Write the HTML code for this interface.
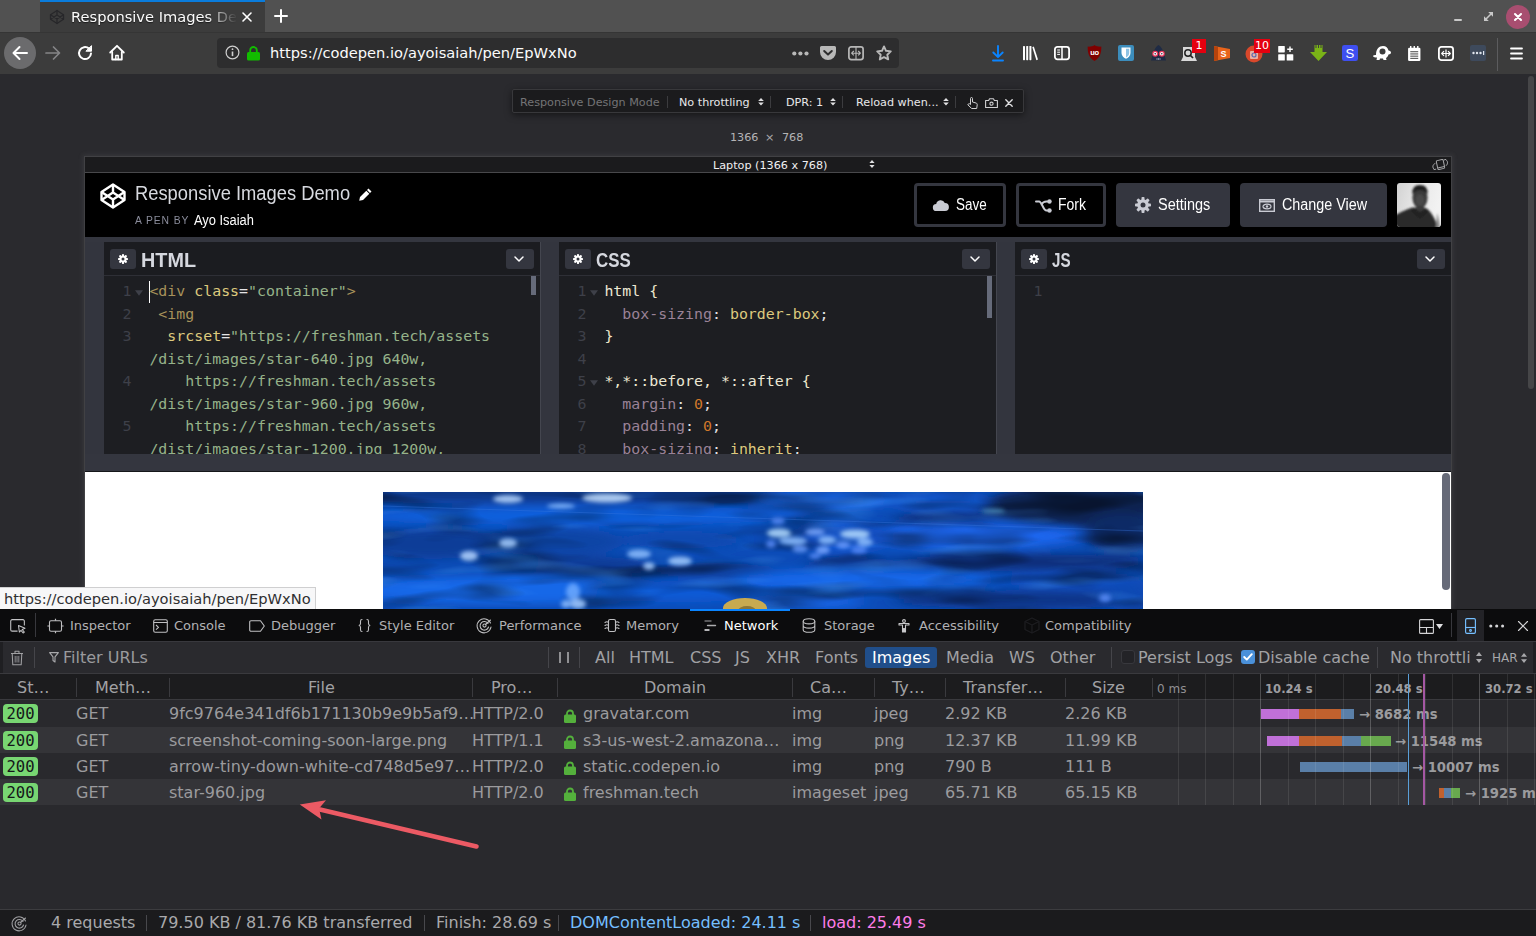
<!DOCTYPE html>
<html><head><meta charset="utf-8"><title>Responsive Images Demo</title>
<style>
*{box-sizing:border-box;margin:0;padding:0}
html,body{width:1536px;height:936px;overflow:hidden;background:#2a2a2e}
body{font-family:"DejaVu Sans","Liberation Sans",sans-serif;font-size:13px;color:#f9f9fa;position:relative}
.a{position:absolute}
.t{position:absolute;white-space:nowrap;line-height:1}
svg{position:absolute;overflow:visible}
.ff{font-size:14.650px}
/* firefox chrome */
#tabbar{left:0;top:0;width:1536px;height:32px;background:#515151}
#tab{left:40px;top:0;width:225px;height:32px;background:#3c3c3c;border-top:2px solid #0a7cdc}
#nav{left:0;top:32px;width:1536px;height:42px;background:#3c3c3c;border-top:1px solid #353535}
#url{left:217px;top:38px;width:682px;height:30px;background:#2d2d2e;border-radius:4px}
</style></head><body>
<!-- TABBAR -->
<div class="a" id="tabbar"></div>
<div class="a" id="tab"></div>
<!-- favicon -->
<svg style="left:49px;top:9px" width="16" height="16" viewBox="0 0 16 16" fill="none" stroke="#27272a" stroke-width="1.3" stroke-linejoin="round"><path d="M8 1.5 14.5 5.7v4.6L8 14.5 1.5 10.3V5.7z"/><path d="M1.5 5.7 8 10l6.5-4.3M1.5 10.3 8 6l6.5 4.3M8 1.5V6M8 10v4.5"/></svg>
<div class="t ff" style="left:71px;top:9px;width:167px;overflow:hidden;color:#fbfbfb;text-shadow:0 1px 1px rgba(0,0,0,.6);-webkit-mask-image:linear-gradient(90deg,#000 135px,transparent 166px);mask-image:linear-gradient(90deg,#000 135px,transparent 166px);height:18px;line-height:16px">Responsive Images Demo</div>
<svg style="left:242px;top:12px" width="10" height="10" viewBox="0 0 10 10" stroke="#fff" stroke-width="1.6" stroke-linecap="round"><path d="M1 1 9 9M9 1 1 9"/></svg>
<svg style="left:274px;top:9px" width="14" height="14" viewBox="0 0 14 14" stroke="#fff" stroke-width="2" stroke-linecap="round"><path d="M7 1V13M1 7H13"/></svg>
<!-- window controls -->
<div class="a" style="left:1454px;top:18.500px;width:8px;height:2.500px;border-radius:1px;background:#c8c8c8"></div>
<svg style="left:1484px;top:12px" width="9" height="9" viewBox="0 0 9 9" fill="#c8c8c8"><path d="M4.200 0H9v4.800zM0 4.200V9h4.800z"/><path d="M7.500 1.500 1.500 7.500" stroke="#c8c8c8" stroke-width="1.600"/></svg>
<div class="a" style="left:1506px;top:5px;width:24px;height:24px;border-radius:50%;background:#a84e70"></div>
<svg style="left:1514px;top:13px" width="8" height="8" viewBox="0 0 8 8" stroke="#fff" stroke-width="2.100" stroke-linecap="round"><path d="M1 1 7 7M7 1 1 7"/></svg>
<!-- NAVBAR -->
<div class="a" id="nav"></div>
<div class="a" style="left:4px;top:37px;width:32px;height:32px;border-radius:50%;background:#6b6b6d"></div>
<svg style="left:12px;top:45px" width="16" height="16" viewBox="0 0 16 16" fill="none" stroke="#fff" stroke-width="2" stroke-linecap="round" stroke-linejoin="round"><path d="M15 8H2M7.5 2 1.5 8l6 6"/></svg>
<svg style="left:45px;top:45px" width="16" height="16" viewBox="0 0 16 16" fill="none" stroke="#858587" stroke-width="1.7" stroke-linecap="round" stroke-linejoin="round"><path d="M1 8H14M8.5 2l6 6-6 6"/></svg>
<svg style="left:77px;top:45px" width="16" height="16" viewBox="0 0 16 16" fill="none" stroke="#fff" stroke-width="2" stroke-linecap="round" stroke-linejoin="round"><path d="M14 8.5A6 6 0 1 1 12 3.6"/><path d="M14.5 1v5.2H9.3z" fill="#fff" stroke-width="1"/></svg>
<svg style="left:109px;top:44px" width="16" height="17" viewBox="0 0 16 17" fill="none" stroke="#fff" stroke-width="1.8" stroke-linejoin="round" stroke-linecap="round"><path d="M1.2 8.5 8 1.8l6.8 6.7"/><path d="M3.2 8v7.5h9.6V8"/><path d="M6.8 15.5v-4h2.4v4" stroke-width="1.4"/></svg>
<div class="a" id="url"></div>
<svg style="left:225px;top:45px" width="15" height="15" viewBox="0 0 15 15" fill="none" stroke="#d0d0d0" stroke-width="1.2"><circle cx="7.5" cy="7.5" r="6.4"/><path d="M7.5 6.5v4.6" stroke-width="1.6"/><circle cx="7.5" cy="4.2" r=".9" fill="#d0d0d0" stroke="none"/></svg>
<svg style="left:247px;top:46px" width="13" height="15" viewBox="0 0 13 15"><path d="M3.2 7V4.3a3.3 3.3 0 0 1 6.6 0V7" fill="none" stroke="#12bc00" stroke-width="1.8"/><rect x="0" y="6" width="13" height="8.5" rx="1.5" fill="#12bc00"/></svg>
<div class="t ff" style="left:270px;top:45px;color:#fbfbfb;line-height:16px">https://codepen.io/ayoisaiah/pen/EpWxNo</div>
<!-- url bar right icons -->
<svg style="left:791.500px;top:50.500px" width="17" height="5" viewBox="0 0 17 5" fill="#b8b8b8"><circle cx="2.300" cy="2.500" r="2.100"/><circle cx="8.400" cy="2.500" r="2.100"/><circle cx="14.500" cy="2.500" r="2.100"/></svg>
<svg style="left:820px;top:46px" width="16" height="15" viewBox="0 0 16 15"><path d="M1.5 0h13A1.5 1.5 0 0 1 16 1.5V6a8 8 0 0 1-16 0V1.500A1.500 1.500 0 0 1 1.500 0z" fill="#b8b8b8"/><path d="M4.200 5 8 8.600 11.800 5" fill="none" stroke="#2d2d2e" stroke-width="2" stroke-linecap="round" stroke-linejoin="round"/></svg>
<svg style="left:848px;top:46px" width="16" height="15" viewBox="0 0 16 15" fill="none" stroke="#b8b8b8" stroke-width="1.700" stroke-linejoin="round"><rect x=".9" y=".9" width="14.200" height="12.700" rx="2.300"/><path d="M3.800 7.200h8.400M5.800 5 3.600 7.200l2.200 2.200M10.200 5l2.200 2.200-2.200 2.200M8 1v12.500" stroke-width="1.100"/></svg>
<svg style="left:876px;top:45px" width="16" height="16" viewBox="0 0 16 16" fill="none" stroke="#b8b8b8" stroke-width="1.900" stroke-linejoin="round"><path d="M8 1.400 10 5.800 14.800 6.400 11.300 9.700 12.200 14.400 8 12.100 3.800 14.400 4.700 9.700 1.200 6.400 6 5.800z"/></svg>
<!-- toolbar icons -->
<svg style="left:990px;top:45px" width="15" height="17" viewBox="0 0 15 17" fill="none" stroke="#0a84ff" stroke-width="1.900" stroke-linecap="round" stroke-linejoin="round"><path d="M8 1v11M3.300 7.500 8 12.200l4.700-4.700M3 15.500h10"/></svg>
<svg style="left:1022px;top:46px" width="17" height="15" viewBox="0 0 17 15" fill="#fff"><rect x="1" y="0" width="2" height="14.200" rx=".6"/><rect x="4.200" y="0" width="2" height="14.200" rx=".6"/><rect x="7.400" y="0" width="2" height="14.200" rx=".6"/><path d="M10.300 1.300 11.800.600 16 13.500l-1.600.7z"/></svg>
<svg style="left:1054px;top:46px" width="16" height="15" viewBox="0 0 16 15" fill="none" stroke="#fff" stroke-width="1.800"><rect x=".9" y=".9" width="14.200" height="12.400" rx="2.500"/><path d="M8 1v12.500" stroke-width="1.500"/><path d="M3.200 4h2.800M3.200 6.200h2.800M3.200 8.400h2.800" stroke-width="1"/></svg>
<!-- ublock -->
<svg style="left:1087px;top:45px" width="15" height="16" viewBox="0 0 15 16"><path d="M7.500 0C6.500 1.200 3 1.800.7 1.600.5 8 2 13 7.500 16 13 13 14.500 8 14.300 1.600 12 1.800 8.500 1.200 7.500 0z" fill="#800000"/><text x="7.500" y="9.800" font-size="7.500" font-family="Liberation Sans,sans-serif" font-weight="700" fill="#fff" text-anchor="middle" letter-spacing="-.3">uo</text></svg>
<!-- bitwarden -->
<svg style="left:1118px;top:45px" width="16" height="16" viewBox="0 0 16 16"><rect width="16" height="16" rx="2" fill="#3c8dbc"/><path d="M8 2.500H3.500v5.500c0 3 2.500 4.800 4.500 5.800 2-1 4.500-2.800 4.500-5.800V2.500z" fill="#fff"/><path d="M8 3.800v8.600c1.500-.9 3.200-2.300 3.200-4.400V3.800z" fill="#8ec3e4"/></svg>
<!-- privacy possum eyes -->
<svg style="left:1150px;top:45px" width="17" height="16" viewBox="0 0 17 16"><path d="M8.500 0C5.500 1.500 3.500 6 1 15.500h15C13.500 6 11.500 1.500 8.500 0z" fill="#1f2b45"/><circle cx="5.200" cy="8.800" r="3" fill="#e8365a"/><circle cx="11.800" cy="8.800" r="3" fill="#e8365a"/><circle cx="5.200" cy="8.800" r="1.800" fill="#fff"/><circle cx="11.800" cy="8.800" r="1.800" fill="#fff"/><circle cx="5.200" cy="8.800" r=".8" fill="#1f2b45"/><circle cx="11.800" cy="8.800" r=".8" fill="#1f2b45"/><path d="M6.500 14h4" stroke="#9aa6bd" stroke-width="1.300" stroke-dasharray="1 .5"/></svg>
<!-- search ext -->
<svg style="left:1181px;top:46px" width="16" height="16" viewBox="0 0 16 16"><path d="M2 1h12v10l2 4H0l2-4z" fill="#d9d9d9"/><circle cx="7" cy="7" r="3.200" fill="none" stroke="#222" stroke-width="1.500"/><path d="M9.500 9.500 12 12" stroke="#222" stroke-width="1.700"/></svg>
<div class="a" style="left:1192px;top:39px;width:14px;height:14px;background:#e5000f"></div>
<div class="t" style="left:1192px;top:40px;width:14px;text-align:center;font-size:11px;color:#fff">1</div>
<!-- S orange -->
<svg style="left:1213px;top:44px" width="18" height="18" viewBox="0 0 18 18"><path d="M1 2 17 5v9L1 17z" fill="#e8641b"/><path d="M1 2 5 3v13l-4 1z" fill="#b6430c"/><text x="10.500" y="13" font-size="9" font-weight="700" font-family="Liberation Sans,sans-serif" fill="#fff" text-anchor="middle">S</text></svg>
<!-- red badge thing -->
<svg style="left:1245px;top:45px" width="18" height="18" viewBox="0 0 18 18"><circle cx="9" cy="9" r="8.500" fill="#d9482b"/><rect x="5" y="6" width="8" height="8" rx="1" fill="#e9b0a3"/><circle cx="9" cy="10" r="2" fill="none" stroke="#5a6bb0" stroke-width="1.200"/></svg>
<div class="a" style="left:1254px;top:39px;width:16px;height:14px;background:#e5000f"></div>
<div class="t" style="left:1254px;top:40px;width:16px;text-align:center;font-size:11px;color:#fff">10</div>
<!-- grid plus -->
<svg style="left:1278px;top:46px" width="16" height="15" viewBox="0 0 16 15" fill="#fff"><rect x=".2" y="0" width="6.600" height="6.400" rx=".6"/><rect x=".2" y="8.200" width="6.600" height="6.400" rx=".6"/><rect x="8.700" y="8.200" width="6.600" height="6.400" rx=".6"/><path d="M12 .4v5.600M9.200 3.200h5.600" stroke="#fff" stroke-width="1.400"/></svg>
<!-- green arrow -->
<svg style="left:1310px;top:45px" width="17" height="16" viewBox="0 0 17 16"><path d="M4.500 0h8v7H17l-8.500 9L0 7h4.500z" fill="#7ab317"/><path d="M6 0v3M8.500 0v3M11 0v3" stroke="#3c3c3c" stroke-width="1"/></svg>
<!-- S blue -->
<svg style="left:1342px;top:45px" width="16" height="16" viewBox="0 0 17 17"><rect width="17" height="17" rx="2.500" fill="#3f4ff0"/><text x="8.500" y="13.500" font-size="14" font-family="Liberation Sans,sans-serif" fill="#fff" text-anchor="middle">S</text></svg>
<!-- turtle -->
<svg style="left:1373px;top:45px" width="18" height="16" viewBox="0 0 18 16" fill="#fff"><path d="M3 10C3 4 6 1 10 1c3 0 5 2 5.500 4.500 1.500 0 2.500 1 2.500 2s-1 2-2.500 2c-.5 2-1.500 3-2.500 3.500l.5 2h-3l-.5-1.500H7L6.500 15h-3l.5-2.500C2.500 12.500 0 12 0 11s2-1 3-1z"/><circle cx="9.500" cy="6.500" r="3" fill="#3c3c3c"/></svg>
<!-- notepad -->
<svg style="left:1408px;top:46px" width="12.500" height="15" viewBox="0 0 14 17"><rect y="2" width="14" height="15" rx="1.500" fill="#fff"/><path d="M3 0v4M7 0v4M11 0v4" stroke="#fff" stroke-width="1.600"/><path d="M2.500 6.500h9M2.500 9h9M2.500 11.500h9M2.500 14h9" stroke="#3c3c3c" stroke-width="1.100"/></svg>
<!-- responsive -->
<svg style="left:1438px;top:46px" width="16" height="15" viewBox="0 0 16 15" fill="none" stroke="#fff" stroke-width="1.800" stroke-linejoin="round"><rect x=".9" y=".9" width="14.200" height="13.200" rx="2.500"/><path d="M4.300 7.500h7.400M6 5.200 3.700 7.500 6 9.800M10 5.200l2.300 2.300L10 9.800M8 3.500v8" stroke-width="1.200"/></svg>
<!-- dots box -->
<div class="a" style="left:1470px;top:45px;width:16px;height:16px;border-radius:2px;background:#3e4a5c"></div>
<svg style="left:1472px;top:51px" width="13" height="4" viewBox="0 0 13 4" fill="#dfe5ee"><circle cx="1.500" cy="2" r="1.200"/><circle cx="5" cy="2" r="1.200"/><circle cx="8.500" cy="2" r="1.200"/><rect x="11" y="0" width="1.200" height="4"/></svg>
<div class="a" style="left:1497px;top:38px;width:1px;height:33px;background:#5c5c5e"></div>
<svg style="left:1510px;top:47px" width="13" height="13" viewBox="0 0 13 13" stroke="#fff" stroke-width="1.800" stroke-linecap="round"><path d="M1 1.500h11M1 6.500h11M1 11.500h11"/></svg>
<!-- RDM -->
<div class="a" style="left:0;top:74px;width:1536px;height:535px;background:#2a2a2e"></div>
<div class="a" style="left:1528px;top:76px;width:6px;height:313px;border-radius:3px;background:#464648"></div>
<div class="a" style="left:512px;top:89px;width:512px;height:24px;background:#1b1b1d;border:1px solid #38383b;border-radius:2px;box-shadow:0 2px 7px rgba(0,0,0,.5)"></div>
<div class="t" style="left:520px;top:97px;font-size:11.2px;color:#747476">Responsive Design Mode</div>
<div class="a" style="left:667px;top:96px;width:1px;height:12px;background:#3c3c3f"></div>
<div class="t" style="left:679px;top:97px;font-size:11.2px;color:#e8e8ea">No throttling</div>
<svg style="left:758px;top:98px" width="6" height="7.500" viewBox="0 0 6 9" preserveAspectRatio="none" fill="#e0e0e2"><path d="M3 0 5.800 3.500H.2zM3 9 .2 5.500h5.600z"/></svg>
<div class="a" style="left:770px;top:96px;width:1px;height:12px;background:#3c3c3f"></div>
<div class="t" style="left:786px;top:97px;font-size:11.2px;color:#e8e8ea">DPR: 1</div>
<svg style="left:830px;top:98px" width="6" height="7.500" viewBox="0 0 6 9" preserveAspectRatio="none" fill="#e0e0e2"><path d="M3 0 5.800 3.500H.2zM3 9 .2 5.500h5.600z"/></svg>
<div class="a" style="left:842px;top:96px;width:1px;height:12px;background:#3c3c3f"></div>
<div class="t" style="left:856px;top:97px;font-size:11.2px;color:#e8e8ea">Reload when...</div>
<svg style="left:943px;top:98px" width="6" height="7.500" viewBox="0 0 6 9" preserveAspectRatio="none" fill="#e0e0e2"><path d="M3 0 5.800 3.500H.2zM3 9 .2 5.500h5.600z"/></svg>
<div class="a" style="left:955px;top:96px;width:1px;height:12px;background:#3c3c3f"></div>
<!-- touch -->
<svg style="left:967px;top:97px" width="11" height="12" viewBox="0 0 11 12" fill="none" stroke="#d0d0d2" stroke-width="1" stroke-linejoin="round" stroke-linecap="round"><path d="M3.500 7V1.500a1 1 0 0 1 2 0V5l3.500 1c1 .3 1.300 1 1.200 2l-.5 3.500h-5L1 8c-.5-1 1-1.800 2.500-1z"/></svg>
<!-- camera -->
<svg style="left:985px;top:98px" width="13" height="10" viewBox="0 0 13 10" fill="none" stroke="#d0d0d2" stroke-width="1.100" stroke-linejoin="round"><path d="M.6 2.500h3l1-1.800h3.800l1 1.800h3v7H.6z"/><circle cx="6.500" cy="5.700" r="1.600"/></svg>
<svg style="left:1005px;top:99px" width="8" height="8" viewBox="0 0 8 8" stroke="#e0e0e2" stroke-width="1.400" stroke-linecap="round"><path d="M.8.800 7.200 7.200M7.200.8.800 7.200"/></svg>
<div class="t" style="left:730px;top:132px;font-size:11.2px;color:#b4b4b6">1366</div>
<div class="t" style="left:765px;top:132px;font-size:11.2px;color:#a8a8aa">×</div>
<div class="t" style="left:782px;top:132px;font-size:11.2px;color:#b4b4b6">768</div>
<!-- viewport frame -->
<div class="a" style="left:84px;top:156px;width:1368px;height:453px;background:#1b1b1d;border:1px solid #414144;border-bottom:0;box-shadow:0 0 5px 1px rgba(120,120,126,.2)"></div>
<div class="a" style="left:85px;top:172px;width:1366px;height:1px;background:#48484b"></div>
<div class="t" style="left:713px;top:160px;font-size:11.2px;color:#f0f0f2">Laptop (1366 x 768)</div>
<svg style="left:869px;top:160px" width="6" height="8" viewBox="0 0 6 8" fill="#e0e0e2"><path d="M3 0 5.600 3H.4zM3 8 .4 5h5.200z"/></svg>
<svg style="left:1431px;top:158px" width="18" height="14" viewBox="0 0 18 14" fill="none" stroke="#a8a8aa" stroke-width="1" stroke-linejoin="round" stroke-linecap="round"><rect x="6" y="2" width="7" height="9" rx="1" transform="rotate(-12 9.500 6.500)"/><path d="M7.500 9.800l5.500-1.200"/><path d="M4 5.500C1.500 6.500 1 9.500 3.200 11.500M3.200 11.500l1.600-.3M14.500 1.500c2.500 1 2.800 4.200.8 6M14.500 1.500 13 2"/></svg>
<!-- CODEPEN -->
<style>
.cp{font-family:"Liberation Sans",sans-serif}
.lato{transform-origin:0 0}
.btn{position:absolute;top:183px;height:44px;border-radius:4px}
.ed{position:absolute;top:242px;height:212px;background:#1d1e22;overflow:hidden}
.edh{position:absolute;left:0;top:0;right:0;height:34px;background:#1b1c20;border-bottom:1px solid #2e2f36}
.gear{position:absolute;left:6px;top:7px;width:26px;height:20px;border-radius:3px;background:#34363f}
.dd{position:absolute;right:6px;top:7px;width:28px;height:20px;border-radius:3px;background:#34363f}
.code{position:absolute;font-family:"DejaVu Sans Mono","Liberation Mono",monospace;font-size:14.9px;line-height:22.5px;white-space:pre;color:#e4e4e6}
.ln{position:absolute;font-family:"DejaVu Sans Mono","Liberation Mono",monospace;font-size:14.9px;line-height:22.5px;white-space:pre;color:#3e4049;text-align:right;width:26px}
.tg{color:#a7925a}.at{color:#ddca7e}.st{color:#96b38a}.pr{color:#9a8297}.nu{color:#d0782a}.pn{color:#e4e4e6}.se{color:#ece8d4}.br{color:#eee8cc}
</style>
<div class="a" style="left:85px;top:173px;width:1366px;height:64px;background:#000"></div>
<div class="a" style="left:85px;top:237px;width:1366px;height:5px;background:#34363f"></div>
<!-- logo -->
<svg style="left:99.500px;top:182.500px" width="26" height="26" viewBox="0 0 26 26" fill="none" stroke="#fff" stroke-width="2.400" stroke-linejoin="round"><path d="M13 1.500 24.500 9v8L13 24.500 1.500 17V9z"/><path d="M1.500 9 13 16.500 24.500 9M1.500 17 13 9.500 24.500 17M13 1.500v8M13 16.500v8"/></svg>
<div class="t cp lato" style="left:135px;top:183px;font-size:20px;color:#d7d9df;transform:scaleX(.917)">Responsive Images Demo</div>
<svg style="left:359px;top:188px" width="13" height="13" viewBox="0 0 13 13" fill="#fff"><path d="M9.500 0.500 12.500 3.500 11 5 8 2zM7.300 2.700l3 3L4 12l-3.800.8L1 9z"/></svg>
<div class="t cp lato" style="left:135px;top:215px;font-size:11.500px;letter-spacing:1px;color:#8b8d9c;transform:scaleX(.9)">A PEN BY</div>
<div class="t cp lato" style="left:194px;top:213px;font-size:14px;color:#fff;transform:scaleX(.92)">Ayo Isaiah</div>
<!-- buttons -->
<div class="btn" style="left:914px;width:92px;background:#000;border:3px solid #34363f"></div>
<svg style="left:933px;top:200px" width="16" height="11" viewBox="0 0 16 11" fill="#c9cbd3"><path d="M3.500 11a3.500 3.500 0 0 1-.3-7A4.500 4.500 0 0 1 11.800 3 4 4 0 0 1 12 11z"/></svg>
<div class="t cp lato" style="left:956px;top:197px;font-size:16px;color:#fff;transform:scaleX(.84)">Save</div>
<div class="btn" style="left:1016px;width:90px;background:#000;border:3px solid #34363f"></div>
<svg style="left:1035px;top:199px" width="17" height="14" viewBox="0 0 17 14" fill="none" stroke="#c9cbd3" stroke-width="2" stroke-linecap="round"><path d="M1 2.500h3c3 0 4 9 7.500 9h2M6.500 5.500c1-2 2.500-3 5-3h2"/><circle cx="14.500" cy="2.500" r="2.200" fill="#c9cbd3" stroke="none"/><circle cx="14.500" cy="11.500" r="2.200" fill="#c9cbd3" stroke="none"/></svg>
<div class="t cp lato" style="left:1058px;top:197px;font-size:16px;color:#fff;transform:scaleX(.875)">Fork</div>
<div class="btn" style="left:1116px;width:114px;background:#34363f"></div>
<svg style="left:1135px;top:197px" width="16" height="16" viewBox="0 0 16 16"><g fill="#c9cbd3"><circle cx="8" cy="8" r="5.800"/><g id="gt"><rect x="6.500" y="0" width="3" height="16" rx=".8"/></g><use href="#gt" transform="rotate(45 8 8)"/><use href="#gt" transform="rotate(90 8 8)"/><use href="#gt" transform="rotate(135 8 8)"/></g><circle cx="8" cy="8" r="2.500" fill="#34363f"/></svg>
<div class="t cp lato" style="left:1158px;top:197px;font-size:16px;color:#fff;transform:scaleX(.904)">Settings</div>
<div class="btn" style="left:1240px;width:147px;background:#34363f"></div>
<svg style="left:1259px;top:199px" width="16" height="13" viewBox="0 0 16 13" fill="none" stroke="#c9cbd3" stroke-width="1.400"><rect x=".7" y=".7" width="14.600" height="11.600"/><path d="M.7 2.500h14.600" stroke-width="2"/><ellipse cx="8" cy="7.500" rx="4" ry="2.300" stroke-width="1.200"/><circle cx="8" cy="7.500" r="1.200" fill="#c9cbd3" stroke="none"/></svg>
<div class="t cp lato" style="left:1282px;top:197px;font-size:16px;color:#fff;transform:scaleX(.896)">Change View</div>
<!-- avatar -->
<svg style="left:1397px;top:183px" width="44" height="44" viewBox="0 0 44 44"><defs><clipPath id="avc"><rect width="44" height="44" rx="3"/></clipPath><filter id="avb"><feGaussianBlur stdDeviation=".8"/></filter><linearGradient id="avg" x1="0" y1="0" x2="1" y2=".3"><stop offset="0" stop-color="#d2d2d2"/><stop offset=".55" stop-color="#e9e9e9"/><stop offset="1" stop-color="#f2f2f2"/></linearGradient></defs><g clip-path="url(#avc)"><rect width="44" height="44" fill="url(#avg)"/><g filter="url(#avb)"><path d="M-3 47V33C2 30 8 27 15 24.500l13 .5c5 2 9 8 13 19v4z" fill="#2a2a2a"/><path d="M40 30c1.500 4 2.500 9 3 15h-4z" fill="#8a8a8a"/><ellipse cx="23" cy="14.500" rx="7.600" ry="11" fill="#3b3b3b"/><path d="M15.300 11C15 5 18 2 23 2s8 3 7.600 9c-2-3-5-4-7.600-4s-5.500 1-7.700 4z" fill="#1e1e1e"/><ellipse cx="23" cy="17" rx="4.500" ry="6" fill="#484848"/><path d="M19 24h8.500l-1 4h-6z" fill="#3a3a3a"/><path d="M17 25l6 5 6-5 3 3-9 8-9-8z" fill="#222"/></g></g></svg>
<!-- EDITORS -->
<div class="a" style="left:85px;top:242px;width:1366px;height:212px;background:#33353e"></div>
<div class="a" style="left:85px;top:454px;width:1366px;height:18px;background:#34363f"></div>
<div class="a" style="left:85px;top:471px;width:1366px;height:1px;background:#15161a"></div>
<div class="a" style="left:540px;top:242px;width:1px;height:212px;background:#44464f"></div><div class="a" style="left:996px;top:242px;width:1px;height:212px;background:#44464f"></div>
<!-- HTML editor -->
<div class="ed" style="left:104px;width:436px">
 <div class="edh"></div><div class="gear"></div><div class="dd"></div>
 <svg style="left:14px;top:12px" width="10" height="10" viewBox="0 0 10 10"><g fill="#fff"><circle cx="5" cy="5" r="3.600"/><rect id="g2" x="4" y="0" width="2" height="10" rx=".4"/><use href="#g2" transform="rotate(45 5 5)"/><use href="#g2" transform="rotate(90 5 5)"/><use href="#g2" transform="rotate(135 5 5)"/></g><circle cx="5" cy="5" r="1.500" fill="#34363f"/></svg>
 <svg style="left:410px;top:14px" width="10" height="6" viewBox="0 0 10 6" fill="none" stroke="#fff" stroke-width="1.500" stroke-linecap="round" stroke-linejoin="round"><path d="M1 1 5 5 9 1"/></svg>
 <div class="t cp lato" style="left:36.500px;top:8px;font-size:20px;font-weight:700;color:#d5d7de;transform:scaleX(.99)">HTML</div>
 <div class="ln" style="left:1.5px;top:38.250px">1
2
3

4

5
</div>
 <svg style="left:31px;top:48px" width="8" height="6" viewBox="0 0 7 5" fill="#3e4049"><path d="M0 0h7L3.500 5z"/></svg>
 <div class="a" style="left:45px;top:39px;width:1px;height:22px;background:#fff"></div>
 <div class="code" style="left:45.4px;top:38.250px"><span class="tg">&lt;div</span> <span class="at">class</span>=<span class="st">"container"</span><span class="tg">&gt;</span>
 <span class="tg">&lt;img</span>
  <span class="at">srcset</span>=<span class="st">"https://freshman.tech/assets</span>
<span class="st">/dist/images/star-640.jpg 640w,</span>
<span class="st">    https://freshman.tech/assets</span>
<span class="st">/dist/images/star-960.jpg 960w,</span>
<span class="st">    https://freshman.tech/assets</span>
<span class="st">/dist/images/star-1200.jpg 1200w,</span></div>
 <div class="a" style="left:427px;top:34px;width:5px;height:19px;background:#666b7a"></div>
</div>
<!-- CSS editor -->
<div class="ed" style="left:559px;width:437px">
 <div class="edh"></div><div class="gear"></div><div class="dd"></div>
 <svg style="left:14px;top:12px" width="10" height="10" viewBox="0 0 10 10"><g fill="#fff"><circle cx="5" cy="5" r="3.600"/><use href="#g2"/><use href="#g2" transform="rotate(45 5 5)"/><use href="#g2" transform="rotate(90 5 5)"/><use href="#g2" transform="rotate(135 5 5)"/></g><circle cx="5" cy="5" r="1.500" fill="#34363f"/></svg>
 <svg style="left:411px;top:14px" width="10" height="6" viewBox="0 0 10 6" fill="none" stroke="#fff" stroke-width="1.500" stroke-linecap="round" stroke-linejoin="round"><path d="M1 1 5 5 9 1"/></svg>
 <div class="t cp lato" style="left:37px;top:8px;font-size:20px;font-weight:700;color:#d5d7de;transform:scaleX(.845)">CSS</div>
 <div class="ln" style="left:1.5px;top:38.250px">1
2
3
4
5
6
7
8</div>
 <svg style="left:31px;top:48px" width="8" height="6" viewBox="0 0 7 5" fill="#3e4049"><path d="M0 0h7L3.500 5z"/></svg>
 <svg style="left:31px;top:138px" width="8" height="6" viewBox="0 0 7 5" fill="#3e4049"><path d="M0 0h7L3.500 5z"/></svg>
 <div class="code" style="left:45.4px;top:38.250px"><span class="se">html</span> <span class="br">{</span>
  <span class="pr">box-sizing</span>: <span class="at">border-box</span>;
<span class="br">}</span>

<span class="se">*,*::before, *::after</span> <span class="br">{</span>
  <span class="pr">margin</span>: <span class="nu">0</span>;
  <span class="pr">padding</span>: <span class="nu">0</span>;
  <span class="pr">box-sizing</span>: <span class="at">inherit</span>;</div>
 <div class="a" style="left:428px;top:34px;width:5px;height:42px;background:#666b7a"></div>
</div>
<!-- JS editor -->
<div class="ed" style="left:1015px;width:436px">
 <div class="edh"></div><div class="gear"></div><div class="dd"></div>
 <svg style="left:14px;top:12px" width="10" height="10" viewBox="0 0 10 10"><g fill="#fff"><circle cx="5" cy="5" r="3.600"/><use href="#g2"/><use href="#g2" transform="rotate(45 5 5)"/><use href="#g2" transform="rotate(90 5 5)"/><use href="#g2" transform="rotate(135 5 5)"/></g><circle cx="5" cy="5" r="1.500" fill="#34363f"/></svg>
 <svg style="left:410px;top:14px" width="10" height="6" viewBox="0 0 10 6" fill="none" stroke="#fff" stroke-width="1.500" stroke-linecap="round" stroke-linejoin="round"><path d="M1 1 5 5 9 1"/></svg>
 <div class="t cp lato" style="left:37px;top:8px;font-size:20px;font-weight:700;color:#d5d7de;transform:scaleX(.76)">JS</div>
 <div class="ln" style="left:1.5px;top:38.250px;color:#3e4048">1</div>
</div>
<!-- PREVIEW -->
<div class="a" style="left:85px;top:472px;width:1366px;height:137px;background:#fff"></div>
<div class="a" style="left:1442px;top:473px;width:8px;height:117px;border-radius:4px;background:#666a78"></div>
<svg style="left:383px;top:492px" width="760" height="117" viewBox="0 0 760 117">
<defs>
<filter id="b8" x="-20%" y="-60%" width="140%" height="220%"><feGaussianBlur stdDeviation="9 5"/></filter>
<filter id="b3" x="-20%" y="-60%" width="140%" height="220%"><feGaussianBlur stdDeviation="2.200"/></filter>
<filter id="tx" x="0" y="0" width="100%" height="100%"><feTurbulence type="fractalNoise" baseFrequency="0.011 0.055" numOctaves="2" seed="7"/><feColorMatrix type="matrix" values="0 0 0 0 0  0 0 0 0 0  0 0 0 0 0  0 0 0 -3.2 1.75"/></filter>
<filter id="tx2" x="0" y="0" width="100%" height="100%"><feTurbulence type="fractalNoise" baseFrequency="0.012 0.06" numOctaves="2" seed="23"/><feColorMatrix type="matrix" values="0 0 0 0 .12  0 0 0 0 .45  0 0 0 0 1  0 0 0 3 -1.62"/></filter>
<clipPath id="seac"><rect width="760" height="117"/></clipPath>
</defs>
<g clip-path="url(#seac)">
<rect width="760" height="117" fill="#0c4cb8"/>
<g filter="url(#b8)">
<rect x="-20" y="-6" width="420" height="16" fill="#0a3888"/>
<ellipse cx="200" cy="24" rx="230" ry="9" fill="#1160de"/>
<ellipse cx="50" cy="52" rx="75" ry="15" fill="#0a3c98"/>
<ellipse cx="170" cy="50" rx="70" ry="14" fill="#0b44a6"/>
<ellipse cx="210" cy="74" rx="60" ry="9" fill="#0a3a94"/>
<ellipse cx="300" cy="48" rx="60" ry="8" fill="#0c48b0"/>
<ellipse cx="330" cy="78" rx="60" ry="7" fill="#0b3c98"/>
<ellipse cx="130" cy="98" rx="170" ry="14" fill="#1368e8"/>
<ellipse cx="300" cy="100" rx="90" ry="10" fill="#105ad6"/>
<ellipse cx="440" cy="8" rx="70" ry="8" fill="#1a6cf0"/>
<ellipse cx="560" cy="10" rx="60" ry="6" fill="#1458d0"/>
<ellipse cx="690" cy="14" rx="90" ry="20" fill="#08204e"/>
<ellipse cx="740" cy="40" rx="40" ry="20" fill="#0a2a66"/>
<ellipse cx="560" cy="27" rx="50" ry="6" fill="#0a2c70"/>
<ellipse cx="590" cy="44" rx="110" ry="12" fill="#1a66ee"/>
<ellipse cx="460" cy="45" rx="50" ry="14" fill="#1556d4"/>
<ellipse cx="640" cy="70" rx="130" ry="8" fill="#0a2e78"/>
<ellipse cx="470" cy="72" rx="50" ry="6" fill="#0b3890"/>
<ellipse cx="480" cy="88" rx="130" ry="10" fill="#1568ea"/>
<ellipse cx="690" cy="88" rx="70" ry="7" fill="#0f4ec0"/>
<ellipse cx="640" cy="108" rx="130" ry="9" fill="#0a3688"/>
<ellipse cx="420" cy="110" rx="60" ry="9" fill="#1262e0"/>
<ellipse cx="745" cy="104" rx="25" ry="14" fill="#0e48b4"/>
</g>
<rect width="760" height="117" filter="url(#tx)" opacity=".38"/><rect width="760" height="117" filter="url(#tx2)" opacity=".3"/>
<g filter="url(#b3)" fill="#8fc0ff" opacity=".85">
<ellipse cx="125" cy="7" rx="15" ry="4" fill="#b8d8ff"/><ellipse cx="224" cy="6" rx="25" ry="4.500" fill="#c4e0ff"/><ellipse cx="178" cy="14" rx="14" ry="2.500"/>
<ellipse cx="125" cy="51" rx="9" ry="4.500" fill="#a4ccff"/><ellipse cx="86" cy="64" rx="9" ry="5" fill="#b4d4ff"/>
<ellipse cx="256" cy="62" rx="12" ry="4.500"/><ellipse cx="266" cy="74" rx="6" ry="4" fill="#a4ccff"/><ellipse cx="297" cy="69" rx="12" ry="4.500" fill="#a4ccff"/>
<ellipse cx="190" cy="100" rx="7" ry="9" fill="#6eaaff"/><ellipse cx="195" cy="112" rx="8" ry="5" fill="#a4ccff"/><ellipse cx="183" cy="112" rx="5" ry="4"/>
<ellipse cx="395" cy="29" rx="7" ry="3.500" fill="#5a8cf8"/>
<ellipse cx="396" cy="41" rx="12" ry="4.500" fill="#b4dcff"/><ellipse cx="472" cy="42" rx="15" ry="4.500" fill="#b4dcff"/><ellipse cx="432" cy="40" rx="10" ry="3.500" fill="#7aa8ff"/>
<ellipse cx="410" cy="49" rx="14" ry="4"/><ellipse cx="444" cy="48" rx="9" ry="4"/><ellipse cx="482" cy="50" rx="8" ry="4"/><ellipse cx="460" cy="53" rx="7" ry="3.500" fill="#6a9cff"/>
<ellipse cx="417" cy="57" rx="8" ry="3.500" fill="#6a9cff"/><ellipse cx="440" cy="58" rx="7" ry="4" fill="#7aa8ff"/><ellipse cx="476" cy="58" rx="8" ry="3.500" fill="#5a8cf8"/><ellipse cx="388" cy="52" rx="5" ry="4" fill="#5a8cf8"/>
<ellipse cx="432" cy="64" rx="6" ry="3" fill="#5a8cf8"/><ellipse cx="722" cy="106" rx="6" ry="4" fill="#5a8cf8"/>
<ellipse cx="610" cy="19" rx="12" ry="2.500" fill="#4a8ab8"/>
</g>
<path d="M0 14 760 39" stroke="#3a78e0" stroke-width=".6" opacity=".6"/>
<ellipse cx="362" cy="116" rx="22" ry="10" fill="#c8aa50"/><ellipse cx="364" cy="119" rx="9" ry="5" fill="#8a7638"/>
</g>
</svg>
<!-- status tooltip -->
<div class="a" style="left:0;top:587px;width:316px;height:22px;background:#f7f7f8;border:1px solid #cfcfd0;border-left:0;border-bottom:0"></div>
<div class="t ff" style="left:4px;top:591px;color:#2f2f31;line-height:16px">https://codepen.io/ayoisaiah/pen/EpWxNo</div>
<!-- DEVTOOLS -->
<style>
.dt{font-size:13px;color:#b1b1b3;top:619px}
.nf{font-size:16px;color:#a1a1a4;top:650px}
.hd{font-size:16px;color:#a1a1a4;top:680px}
.row{position:absolute;left:0;width:1536px;height:26px}
.row .t{font-size:16px;color:#9b9b9e;top:6px}
.sc{position:absolute;left:3px;top:4px;width:35px;height:19px;border-radius:4px;background:#78d672;color:#15151a;font-family:"DejaVu Sans Mono",monospace;font-size:15.600px;line-height:20.500px;text-align:center}
.vl{position:absolute;width:1px;top:678px;height:19px;background:#3a3a3e}
.tk{position:absolute;width:1px;top:674px;height:131px}
.wt{font-size:13.200px!important;font-weight:700;color:#9b9b9e!important;top:8px!important}
.bar{position:absolute;top:9px;height:10px}
</style>
<div class="a" style="left:0;top:609px;width:1536px;height:32px;background:#0c0c0d"></div>
<div class="a" style="left:0;top:641px;width:1536px;height:1px;background:#38383d"></div>
<div class="a" style="left:0;top:642px;width:1536px;height:31px;background:#2a2a2e"></div>
<div class="a" style="left:0;top:642px;width:3px;height:31px;background:#1f1f22"></div><div class="a" style="left:1533px;top:642px;width:3px;height:31px;background:#1f1f22"></div>
<div class="a" style="left:0;top:673px;width:1536px;height:1px;background:#3a3a3e"></div>
<div class="a" style="left:0;top:674px;width:1536px;height:26px;background:#1c1c1e"></div>
<div class="a" style="left:0;top:699px;width:1536px;height:1px;background:#3a3a3e"></div>
<div class="a" style="left:0;top:700px;width:1536px;height:209px;background:#29292d"></div>
<div class="a" style="left:0;top:909px;width:1536px;height:27px;background:#1b1b1d;border-top:1px solid #3c3c3f"></div>
<!-- tabs -->
<svg style="left:10px;top:619px" width="16" height="14" viewBox="0 0 17 15" fill="none" stroke="#c4c4c6" stroke-width="1.150" stroke-linejoin="round"><path d="M8 13H2.200A1.500 1.500 0 0 1 .7 11.500V2.200A1.500 1.500 0 0 1 2.200.7h11.600a1.500 1.500 0 0 1 1.500 1.500V7"/><path d="M9 7l7 3-3 1.200 2.300 2.800-1.300 1-2.300-2.800L10 14z" stroke-width="1.100"/></svg>
<div class="a" style="left:35px;top:613px;width:1px;height:24px;background:#38383d"></div>
<svg style="left:47px;top:617.500px" width="17" height="16" viewBox="0 0 17 16" fill="none" stroke="#c0c0c2" stroke-width="1.100"><rect x="2.500" y="2.700" width="12" height="10.600" rx="1.500"/><path d="M8.500 .7v2M8.500 13.300v2M.4 8h2.100M14.500 8h2.100" stroke-width="1.200"/></svg>
<div class="t dt" style="left:70px">Inspector</div>
<svg style="left:153px;top:619px" width="15" height="14" viewBox="0 0 15 14" fill="none" stroke="#c0c0c2" stroke-width="1.100" stroke-linejoin="round"><rect x=".7" y=".7" width="13.600" height="12.600" rx="1.500"/><path d="M.7 3.500h13.600M3 6l2.500 2.300L3 10.600"/></svg>
<div class="t dt" style="left:174px">Console</div>
<svg style="left:249px;top:620px" width="16" height="12" viewBox="0 0 16 12" fill="none" stroke="#c0c0c2" stroke-width="1.100" stroke-linejoin="round"><path d="M2 .7h9.500L15.300 6l-3.800 5.300H2A1.300 1.300 0 0 1 .7 10V2A1.300 1.300 0 0 1 2 .7z"/></svg>
<div class="t dt" style="left:271px">Debugger</div>
<svg style="left:358px;top:619px" width="13" height="13" viewBox="0 0 13 13" fill="none" stroke="#c0c0c2" stroke-width="1.100" stroke-linecap="round"><path d="M4 .5C2.600.500 2.500 1.300 2.500 2.300V4.800C2.500 5.800 1.700 6.400.8 6.500 1.700 6.600 2.500 7.200 2.500 8.200V10.700C2.500 11.700 2.600 12.500 4 12.500M9 .5C10.400.500 10.500 1.300 10.500 2.300V4.800C10.500 5.800 11.300 6.400 12.200 6.500 11.300 6.600 10.500 7.200 10.500 8.200V10.700C10.500 11.700 10.400 12.500 9 12.500"/></svg>
<div class="t dt" style="left:379px">Style Editor</div>
<svg style="left:477px;top:618px" width="15" height="15" viewBox="0 0 15 15" fill="none" stroke="#c0c0c2" stroke-width="1.050" stroke-linecap="round"><path d="M13.500 5A7 7 0 1 0 14 9"/><path d="M11 5.500A4.300 4.300 0 1 0 11.500 9"/><circle cx="7.500" cy="7.500" r="1.600"/><path d="M8.500 6.500 13.500 2"/></svg>
<div class="t dt" style="left:499px">Performance</div>
<svg style="left:604px;top:618px" width="16" height="15" viewBox="0 0 16 15" fill="none" stroke="#c0c0c2" stroke-width="1.100" stroke-linecap="round"><rect x="4.500" y="1.500" width="7" height="12" rx="1.500"/><path d="M1 4.500c1.500-1 2.500-1 3.500 0M1 7.500c1.500-1 2.500-1 3.500 0M1 10.500c1.500-1 2.500-1 3.500 0M11.500 4.500c1-1 2-1 3.500 0M11.500 7.500c1-1 2-1 3.500 0M11.500 10.500c1-1 2-1 3.500 0"/></svg>
<div class="t dt" style="left:626px">Memory</div>
<div class="a" style="left:690px;top:609px;width:100px;height:2px;background:#0a84ff"></div>
<svg style="left:704px;top:620px" width="14" height="11" viewBox="0 0 14 11" stroke="#f0f0f2" stroke-width="1.400" stroke-linecap="round"><path d="M1 1h6" opacity=".45"/><path d="M3.500 5.500h8" opacity=".7"/><path d="M1 10h4"/></svg>
<div class="t dt" style="left:724px;color:#fff">Network</div>
<svg style="left:802px;top:618px" width="14" height="15" viewBox="0 0 14 15" fill="none" stroke="#c0c0c2" stroke-width="1.100"><ellipse cx="7" cy="3.300" rx="5.800" ry="2.600"/><path d="M1.200 3.300v8.400c0 1.400 2.600 2.600 5.800 2.600s5.800-1.200 5.800-2.600V3.300M1.200 7.500c0 1.400 2.600 2.600 5.800 2.600s5.800-1.200 5.800-2.600"/></svg>
<div class="t dt" style="left:824px">Storage</div>
<svg style="left:898px;top:619px" width="12" height="14" viewBox="0 0 12 14" fill="none" stroke="#c8c8ca" stroke-width="1.100" stroke-linejoin="round"><circle cx="6" cy="2" r="1.400"/><path d="M1 4.500h10v1.500H7.500V13h-1V9.500h-1V13h-1V6H1z"/></svg>
<div class="t dt" style="left:919px">Accessibility</div>
<svg style="left:1024px;top:617px" width="16" height="17" viewBox="0 0 16 17" fill="none" stroke="#1d1d20" stroke-width="1.300" stroke-linejoin="round"><path d="M8 1 15 4.500v8L8 16 1 12.500v-8z"/><path d="M1 4.500 8 8l7-3.500M8 8v8"/></svg>
<div class="t dt" style="left:1045px">Compatibility</div>
<!-- right controls -->
<svg style="left:1419px;top:619px" width="15" height="15" viewBox="0 0 15 15" fill="none" stroke="#d4d4d6" stroke-width="1.100"><rect x=".6" y=".6" width="13.800" height="13.800" rx="1"/><path d="M.6 8.500h13.800M7.500 8.500v5.900"/></svg>
<svg style="left:1436px;top:624px" width="7" height="5" viewBox="0 0 7 5" fill="#e0e0e2"><path d="M0 0h7L3.500 5z"/></svg>
<div class="a" style="left:1451px;top:613px;width:1px;height:24px;background:#38383d"></div>
<div class="a" style="left:1457px;top:610px;width:27px;height:31px;background:#232327"></div>
<svg style="left:1465px;top:618px" width="11" height="16" viewBox="0 0 11 16" fill="none" stroke="#75bfff" stroke-width="1.150"><rect x=".6" y=".6" width="9.800" height="14.800" rx="1.300"/><path d="M.6 9.500h9.800"/><circle cx="5.500" cy="12.400" r=".9"/></svg>
<svg style="left:1489px;top:624px" width="16" height="4" viewBox="0 0 16 4" fill="#d4d4d6"><circle cx="1.800" cy="2" r="1.550"/><circle cx="7.700" cy="2" r="1.550"/><circle cx="13.600" cy="2" r="1.550"/></svg>
<svg style="left:1518px;top:621px" width="10" height="10" viewBox="0 0 10 10" stroke="#d4d4d6" stroke-width="1.150" stroke-linecap="round"><path d="M.5.500 9.500 9.500M9.500.5.500 9.500"/></svg>
<!-- filter toolbar -->
<svg style="left:10px;top:650px" width="14" height="16" viewBox="0 0 14 16" fill="none" stroke="#a0a0a3" stroke-width="1.050" stroke-linejoin="round"><path d="M1 3.500h12M5 3.500V1.200h4v2.300M2.200 3.500l.6 11.300h8.400l.6-11.300"/><path d="M5.200 6v6.500M7 6v6.500M8.800 6v6.500" stroke-width=".8"/></svg>
<div class="a" style="left:34px;top:647px;width:1px;height:21px;background:#45454a"></div>
<svg style="left:49px;top:652px" width="10" height="11" viewBox="0 0 10 11" fill="none" stroke="#a8a8ab" stroke-width="1.100" stroke-linejoin="round"><path d="M.6.600h8.800L6 4.800V10L4 8.500V4.800z"/></svg>
<div class="t nf" style="left:63px;color:#9a9a9d">Filter URLs</div>
<div class="a" style="left:548px;top:647px;width:1px;height:21px;background:#45454a"></div>
<div class="a" style="left:559px;top:652px;width:2px;height:11px;background:#909093"></div><div class="a" style="left:567px;top:652px;width:2px;height:11px;background:#909093"></div>
<div class="a" style="left:579px;top:647px;width:1px;height:21px;background:#45454a"></div>
<div class="t nf" style="left:595px">All</div>
<div class="t nf" style="left:629px">HTML</div>
<div class="t nf" style="left:690px">CSS</div>
<div class="t nf" style="left:735px">JS</div>
<div class="t nf" style="left:766px">XHR</div>
<div class="t nf" style="left:815px">Fonts</div>
<div class="a" style="left:865px;top:647px;width:72px;height:21px;border-radius:3px;background:#204e8a"></div>
<div class="t nf" style="left:872px;color:#fff">Images</div>
<div class="t nf" style="left:946px">Media</div>
<div class="t nf" style="left:1009px">WS</div>
<div class="t nf" style="left:1050px">Other</div>
<div class="a" style="left:1111px;top:647px;width:1px;height:21px;background:#45454a"></div>
<div class="a" style="left:1121px;top:650px;width:14px;height:14px;border-radius:3px;background:#232327;border:1px solid #38383d"></div>
<div class="t nf" style="left:1138px">Persist Logs</div>
<div class="a" style="left:1241px;top:650px;width:14px;height:14px;border-radius:3px;background:#4a90d9"></div>
<svg style="left:1243px;top:653px" width="10" height="8" viewBox="0 0 10 8" fill="none" stroke="#fff" stroke-width="1.900" stroke-linecap="round" stroke-linejoin="round"><path d="M1.200 4 3.800 6.600 8.800 1.200"/></svg>
<div class="t nf" style="left:1258px">Disable cache</div>
<div class="a" style="left:1377px;top:647px;width:1px;height:21px;background:#45454a"></div>
<div class="t nf" style="left:1390px;width:81px;overflow:hidden">No throttling</div>
<svg style="left:1476px;top:652px" width="6" height="11" viewBox="0 0 6 11" fill="#a8a8ab"><path d="M3 0 6 4H0zM3 11 0 7h6z"/></svg>
<div class="t" style="left:1492px;top:652px;font-size:12px;color:#a8a8ab">HAR</div>
<svg style="left:1521px;top:653px" width="6" height="10" viewBox="0 0 6 10" fill="#a8a8ab"><path d="M3 0 6 3.800H0zM3 10 0 6.200h6z"/></svg>
<!-- header -->
<div class="vl" style="left:76px"></div><div class="vl" style="left:169px"></div><div class="vl" style="left:472px"></div><div class="vl" style="left:557px"></div><div class="vl" style="left:792px"></div><div class="vl" style="left:874px"></div><div class="vl" style="left:945px"></div><div class="vl" style="left:1065px"></div><div class="vl" style="left:1152px"></div>
<div class="t hd" style="left:17px">St…</div>
<div class="t hd" style="left:95px">Meth…</div>
<div class="t hd" style="left:308px">File</div>
<div class="t hd" style="left:491px">Pro…</div>
<div class="t hd" style="left:644px">Domain</div>
<div class="t hd" style="left:810px">Ca…</div>
<div class="t hd" style="left:892px">Ty…</div>
<div class="t hd" style="left:963px">Transfer…</div>
<div class="t hd" style="left:1092px">Size</div>
<div class="t" style="left:1157px;top:683px;font-size:12px;color:#8f8f92">0 ms</div>
<div class="t" style="left:1265px;top:684px;font-size:11.600px;font-weight:700;color:#9d9da0">10.24 s</div>
<div class="t" style="left:1375px;top:684px;font-size:11.600px;font-weight:700;color:#9d9da0">20.48 s</div>
<div class="t" style="left:1485px;top:684px;font-size:11.600px;font-weight:700;color:#9d9da0">30.72 s</div>
<!-- ROWS -->
<div class="row" style="top:700px;height:27px">
 <div class="sc">200</div><div class="t" style="left:76px">GET</div><div class="t" style="left:169px">9fc9764e341df6b171130b9e9b5af9…</div><div class="t" style="left:472px">HTTP/2.0</div>
 <div class="t" style="left:583px">gravatar.com</div><div class="t" style="left:792px">img</div><div class="t" style="left:874px">jpeg</div><div class="t" style="left:945px">2.92 KB</div><div class="t" style="left:1065px">2.26 KB</div>
 <div class="bar" style="left:1261px;width:38px;background:#c070d8"></div><div class="bar" style="left:1299px;width:42px;background:#c0612e"></div><div class="bar" style="left:1341px;width:13px;background:#5a7fa8"></div>
 <div class="t wt" style="left:1359px">→ 8682 ms</div>
</div>
<div class="row" style="top:727px;background:#343438">
 <div class="sc">200</div><div class="t" style="left:76px">GET</div><div class="t" style="left:169px">screenshot-coming-soon-large.png</div><div class="t" style="left:472px">HTTP/1.1</div>
 <div class="t" style="left:583px;width:208px;overflow:hidden">s3-us-west-2.amazona…</div><div class="t" style="left:792px">img</div><div class="t" style="left:874px">png</div><div class="t" style="left:945px">12.37 KB</div><div class="t" style="left:1065px">11.99 KB</div>
 <div class="bar" style="left:1267px;width:32px;background:#c070d8"></div><div class="bar" style="left:1299px;width:43px;background:#c0612e"></div><div class="bar" style="left:1342px;width:19px;background:#5a7fa8"></div><div class="bar" style="left:1361px;width:30px;background:#68a94e"></div>
 <div class="t wt" style="left:1395px">→ 11548 ms</div>
</div>
<div class="row" style="top:753px">
 <div class="sc">200</div><div class="t" style="left:76px">GET</div><div class="t" style="left:169px">arrow-tiny-down-white-cd748d5e97…</div><div class="t" style="left:472px">HTTP/2.0</div>
 <div class="t" style="left:583px">static.codepen.io</div><div class="t" style="left:792px">img</div><div class="t" style="left:874px">png</div><div class="t" style="left:945px">790 B</div><div class="t" style="left:1065px">111 B</div>
 <div class="bar" style="left:1300px;width:107px;background:#5a7fa8"></div>
 <div class="t wt" style="left:1412px">→ 10007 ms</div>
</div>
<div class="row" style="top:779px;background:#343438">
 <div class="sc">200</div><div class="t" style="left:76px">GET</div><div class="t" style="left:169px">star-960.jpg</div><div class="t" style="left:472px">HTTP/2.0</div>
 <div class="t" style="left:583px">freshman.tech</div><div class="t" style="left:792px">imageset</div><div class="t" style="left:874px">jpeg</div><div class="t" style="left:945px">65.71 KB</div><div class="t" style="left:1065px">65.15 KB</div>
 <div class="bar" style="left:1439px;width:5px;background:#c0612e"></div><div class="bar" style="left:1444px;width:7px;background:#5a7fa8"></div><div class="bar" style="left:1451px;width:9px;background:#68a94e"></div>
 <div class="t wt" style="left:1465px">→ 1925 ms</div>
</div>
<!-- lock icons -->
<svg style="left:564px;top:709px" width="12" height="14" viewBox="0 0 12 14"><g id="lk"><path d="M3 6V4.500a3 3 0 0 1 6 0V6" fill="none" stroke="#54b03c" stroke-width="1.800"/><rect y="5.500" width="12" height="8.500" rx="1.500" fill="#54b03c"/></g></svg>
<svg style="left:564px;top:735px" width="12" height="14" viewBox="0 0 12 14"><use href="#lk"/></svg>
<svg style="left:564px;top:761px" width="12" height="14" viewBox="0 0 12 14"><use href="#lk"/></svg>
<svg style="left:564px;top:787px" width="12" height="14" viewBox="0 0 12 14"><use href="#lk"/></svg>
<!-- waterfall ticks -->
<div class="tk" style="left:1178px;background:rgba(255,255,255,.09)"></div><div class="tk" style="left:1205px;background:rgba(255,255,255,.09)"></div><div class="tk" style="left:1233px;background:rgba(255,255,255,.09)"></div>
<div class="tk" style="left:1260px;background:rgba(255,255,255,.22)"></div>
<div class="tk" style="left:1288px;background:rgba(255,255,255,.09)"></div><div class="tk" style="left:1315px;background:rgba(255,255,255,.09)"></div><div class="tk" style="left:1343px;background:rgba(255,255,255,.09)"></div>
<div class="tk" style="left:1370px;background:rgba(255,255,255,.22)"></div>
<div class="tk" style="left:1398px;background:rgba(255,255,255,.09)"></div><div class="tk" style="left:1425px;background:rgba(255,255,255,.09)"></div><div class="tk" style="left:1452px;background:rgba(255,255,255,.09)"></div>
<div class="tk" style="left:1479px;background:rgba(255,255,255,.22)"></div>
<div class="tk" style="left:1507px;background:rgba(255,255,255,.09)"></div><div class="tk" style="left:1534px;background:rgba(255,255,255,.09)"></div>
<div class="tk" style="left:1408px;width:1px;background:#5a9fd8"></div>
<div class="tk" style="left:1423px;width:2px;background:#a457a3"></div>
<!-- red arrow -->
<svg style="left:0;top:0" width="1536" height="936" viewBox="0 0 1536 936"><path d="M476.500 846.500 320 809.500" stroke="#ec5a64" stroke-width="4.600" stroke-linecap="round" fill="none"/><path d="M299.800 804.600 326 800.300 319 808.500 321.500 819.600z" fill="#ec5a64"/></svg>
<!-- status bar -->
<svg style="left:12px;top:916px" width="15" height="15" viewBox="0 0 15 15" fill="none" stroke="#a0a0a3" stroke-width="1.050" stroke-linecap="round"><path d="M13.500 5A7 7 0 1 0 14 9"/><path d="M11 5.500A4.300 4.300 0 1 0 11.500 9"/><circle cx="7.500" cy="7.500" r="1.600"/><path d="M8.500 6.500 13.500 2"/></svg>
<div class="t" style="left:51px;top:915px;font-size:16px;color:#a9a9ac">4 requests</div>
<div class="a" style="left:146px;top:915px;width:1px;height:16px;background:#48484c"></div>
<div class="t" style="left:158px;top:915px;font-size:16px;color:#a9a9ac">79.50 KB / 81.76 KB transferred</div>
<div class="a" style="left:424px;top:915px;width:1px;height:16px;background:#48484c"></div>
<div class="t" style="left:436px;top:915px;font-size:16px;color:#a9a9ac">Finish: 28.69 s</div>
<div class="a" style="left:558px;top:915px;width:1px;height:16px;background:#48484c"></div>
<div class="t" style="left:570px;top:915px;font-size:16px;color:#75bfff">DOMContentLoaded: 24.11 s</div>
<div class="a" style="left:810px;top:915px;width:1px;height:16px;background:#48484c"></div>
<div class="t" style="left:822px;top:915px;font-size:16px;color:#ff7de9">load: 25.49 s</div>
</body></html>
